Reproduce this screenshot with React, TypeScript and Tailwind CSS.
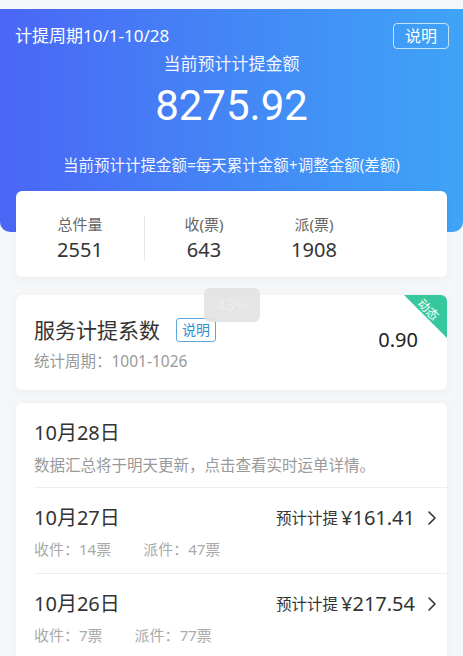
import { type FC } from "react";

const font = "font-['Noto_Sans','Noto_Sans_CJK_SC',sans-serif]";

interface DayRow {
    date: string;
    amount: string;
    pickup: string;
    deliver: string;
}

const rows: DayRow[] = [
    { date: "10月27日", amount: "161.41", pickup: "14票", deliver: "47票" },
    { date: "10月26日", amount: "217.54", pickup: "7票", deliver: "77票" },
];

const Chevron: FC = () => (
    <svg width="10" height="16" viewBox="0 0 10 16" className="ml-[12px]">
        <polyline points="2,2 8,8 2,14" fill="none" stroke="#333" strokeWidth="1.6" strokeLinecap="round" strokeLinejoin="round" />
    </svg>
);

const App: FC = () => {
    return (
        <div className={`${font} w-[463px] h-[656px] overflow-hidden bg-[#f5f6f8] pt-[9px] relative`}>
            {/* header */}
            <div className="h-[223px] rounded-b-[10px] bg-gradient-to-r from-[#4a66f6] via-[#4486f6] to-[#3ea4f6] text-white px-[15px] pt-[14px]">
                <div className="flex items-center justify-between h-[26px]">
                    <span className="text-[17px] leading-[26px]">计提周期10/1-10/28</span>
                    <span className="h-[26px] px-[11px] mr-[-1px] border border-white/70 rounded-[4px] text-[16px] leading-[24px]">说明</span>
                </div>
                <div className="text-center text-[17px] leading-[22px] mt-[4px] text-white/95">当前预计计提金额</div>
                <div className="text-center text-[42px] leading-[48px] mt-[7px] font-['Roboto','Noto_Sans',sans-serif]">8275.92</div>
                <div className="text-center text-[15.5px] leading-[22px] mt-[24px] text-white/95">当前预计计提金额=每天累计金额+调整金额(差额)</div>
            </div>

            {/* stats card */}
            <div className="mx-[16px] -mt-[41px] bg-white rounded-[6px] shadow-[0_2px_8px_rgba(0,0,0,0.04)] pt-[23px] pb-[14px] flex items-center relative">
                <div className="w-[128px] flex flex-col items-center">
                    <span className="text-[15px] leading-[20px] text-[#666]">总件量</span>
                    <span className="text-[20px] leading-[26px] mt-[3px] text-[#333]">2551</span>
                </div>
                <div className="w-px h-[45px] bg-[#e6e6e6]" />
                <div className="w-[118px] flex flex-col items-center">
                    <span className="text-[15px] leading-[20px] text-[#666]">收(票)</span>
                    <span className="text-[20px] leading-[26px] mt-[3px] text-[#333]">643</span>
                </div>
                <div className="w-[102px] flex flex-col items-center">
                    <span className="text-[15px] leading-[20px] text-[#666]">派(票)</span>
                    <span className="text-[20px] leading-[26px] mt-[3px] text-[#333]">1908</span>
                </div>
            </div>

            {/* coefficient card */}
            <div className="mx-[16px] mt-[18px] bg-white rounded-[6px] shadow-[0_2px_8px_rgba(0,0,0,0.04)] pt-[21px] pb-[19px] pl-[18px] pr-[29px] flex items-center justify-between relative overflow-hidden">
                <div>
                    <div className="flex items-center h-[28px]">
                        <span className="text-[21px] leading-[28px] text-[#333]">服务计提系数</span>
                        <span className="ml-[16px] h-[24px] px-[5px] border border-[#5aa8df] rounded-[3px] text-[14px] leading-[22px] text-[#2f8fd8]">说明</span>
                    </div>
                    <div className="text-[15.5px] leading-[20px] mt-[7px] text-[#999]">统计周期：1001-1026</div>
                </div>
                <span className="text-[20px] leading-[26px] text-[#222] mt-[-8px]">0.90</span>
                <div className="absolute top-0 right-0 w-[43px] h-[43px] bg-[#35c89c] [clip-path:polygon(0_0,100%_0,100%_100%)]" />
                <span className="absolute top-[8px] right-[7px] rotate-45 text-[12px] leading-[14px] text-white">动态</span>
            </div>

            {/* toast */}
            <div className="absolute left-[204px] top-[288px] w-[56px] h-[34px] rounded-[6px] bg-[#e2e2e2]/90 flex items-center justify-center text-[16px] text-white/30">43%</div>

            {/* daily list */}
            <div className="mx-[16px] mt-[13px] bg-white rounded-t-[6px] shadow-[0_2px_8px_rgba(0,0,0,0.04)] pl-[18px]">
                <div className="pt-[18px] pb-[12px] border-b border-[#eeeeee]">
                    <div className="text-[20px] leading-[24px] text-[#333]">10月28日</div>
                    <div className="text-[15.5px] leading-[20px] mt-[10px] text-[#999]">数据汇总将于明天更新，点击查看实时运单详情。</div>
                </div>
                {rows.map((r, i) => (
                    <div key={r.date} className={`pt-[18px] pb-[14px] pr-[10px] ${i < rows.length - 1 ? "border-b border-[#eeeeee]" : ""}`}>
                        <div className="flex items-center justify-between h-[24px]">
                            <span className="text-[20px] leading-[24px] text-[#333]">{r.date}</span>
                            <div className="flex items-center">
                                <span className="text-[15.5px] leading-[24px] text-[#333]">预计计提</span>
                                <span className="text-[20px] leading-[24px] text-[#333] ml-[3px]">¥{r.amount}</span>
                                <Chevron />
                            </div>
                        </div>
                        <div className="flex text-[15px] leading-[20px] mt-[9px] text-[#aaa]">
                            <span>收件：{r.pickup}</span>
                            <span className="ml-[32px]">派件：{r.deliver}</span>
                        </div>
                    </div>
                ))}
            </div>
        </div>
    );
};

export default App;
